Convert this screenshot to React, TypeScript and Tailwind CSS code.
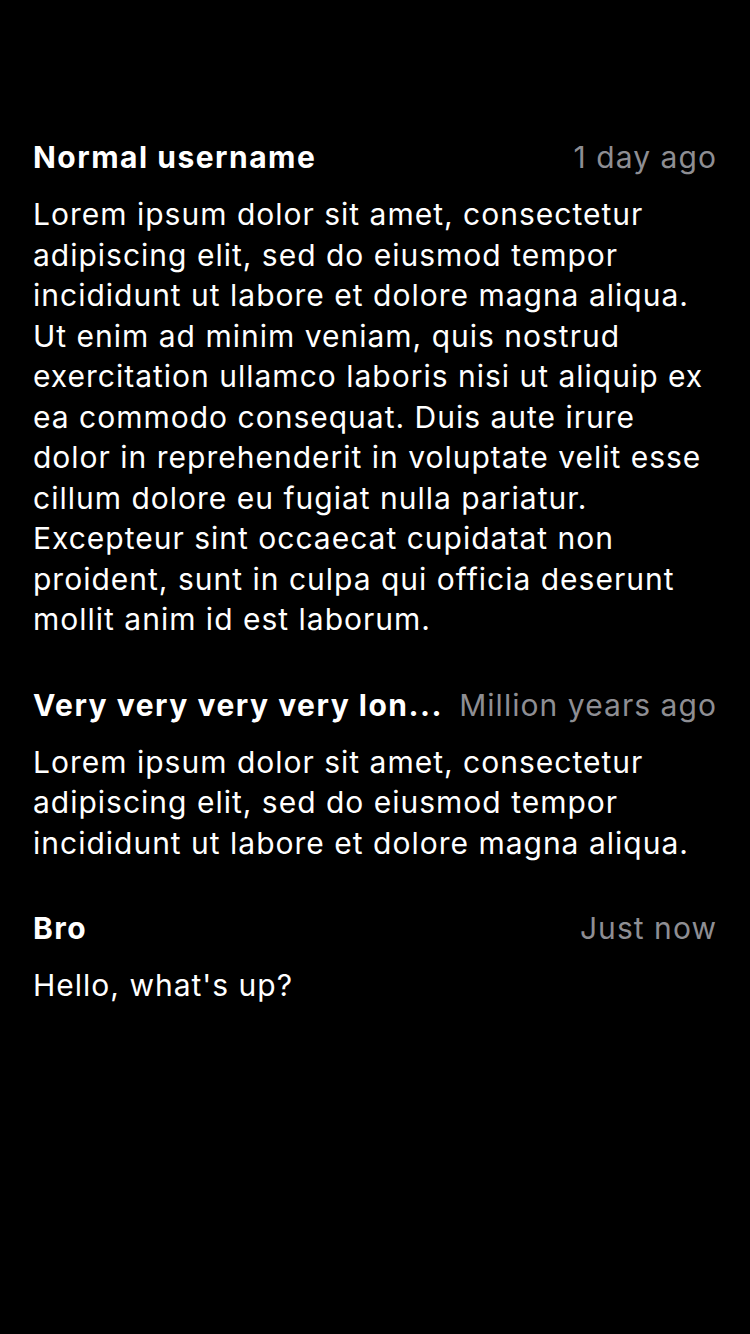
import React from "react";

type Comment = { user: string; time: string; text: string };

const comments: Comment[] = [
  {
    user: "Normal username",
    time: "1 day ago",
    text: "Lorem ipsum dolor sit amet, consectetur adipiscing elit, sed do eiusmod tempor incididunt ut labore et dolore magna aliqua. Ut enim ad minim veniam, quis nostrud exercitation ullamco laboris nisi ut aliquip ex ea commodo consequat. Duis aute irure dolor in reprehenderit in voluptate velit esse cillum dolore eu fugiat nulla pariatur. Excepteur sint occaecat cupidatat non proident, sunt in culpa qui officia deserunt mollit anim id est laborum.",
  },
  {
    user: "Very very very very lon...",
    time: "Million years ago",
    text: "Lorem ipsum dolor sit amet, consectetur adipiscing elit, sed do eiusmod tempor incididunt ut labore et dolore magna aliqua.",
  },
  {
    user: "Bro",
    time: "Just now",
    text: "Hello, what's up?",
  },
];

export default function App() {
  return (
    <div
      className="min-h-[1334px] w-[750px] bg-black text-white"
      style={{ fontFamily: "Inter, 'Noto Sans', sans-serif" }}
    >
      <div className="flex flex-col gap-[45px] px-[33px] pt-[137px]">
        {comments.map((c, i) => (
          <div key={i} className="flex flex-col gap-[17px]">
            <div className="flex items-center justify-between gap-[8px] text-[30px] leading-[40px]">
              <span className="whitespace-nowrap font-bold tracking-[1.5px]">{c.user}</span>
              <span className="shrink-0 whitespace-nowrap text-[#8e8e93] tracking-[1.05px]">
                {c.time}
              </span>
            </div>
            <p className="text-[30px] leading-[40.5px] tracking-[1px]">{c.text}</p>
          </div>
        ))}
      </div>
    </div>
  );
}
